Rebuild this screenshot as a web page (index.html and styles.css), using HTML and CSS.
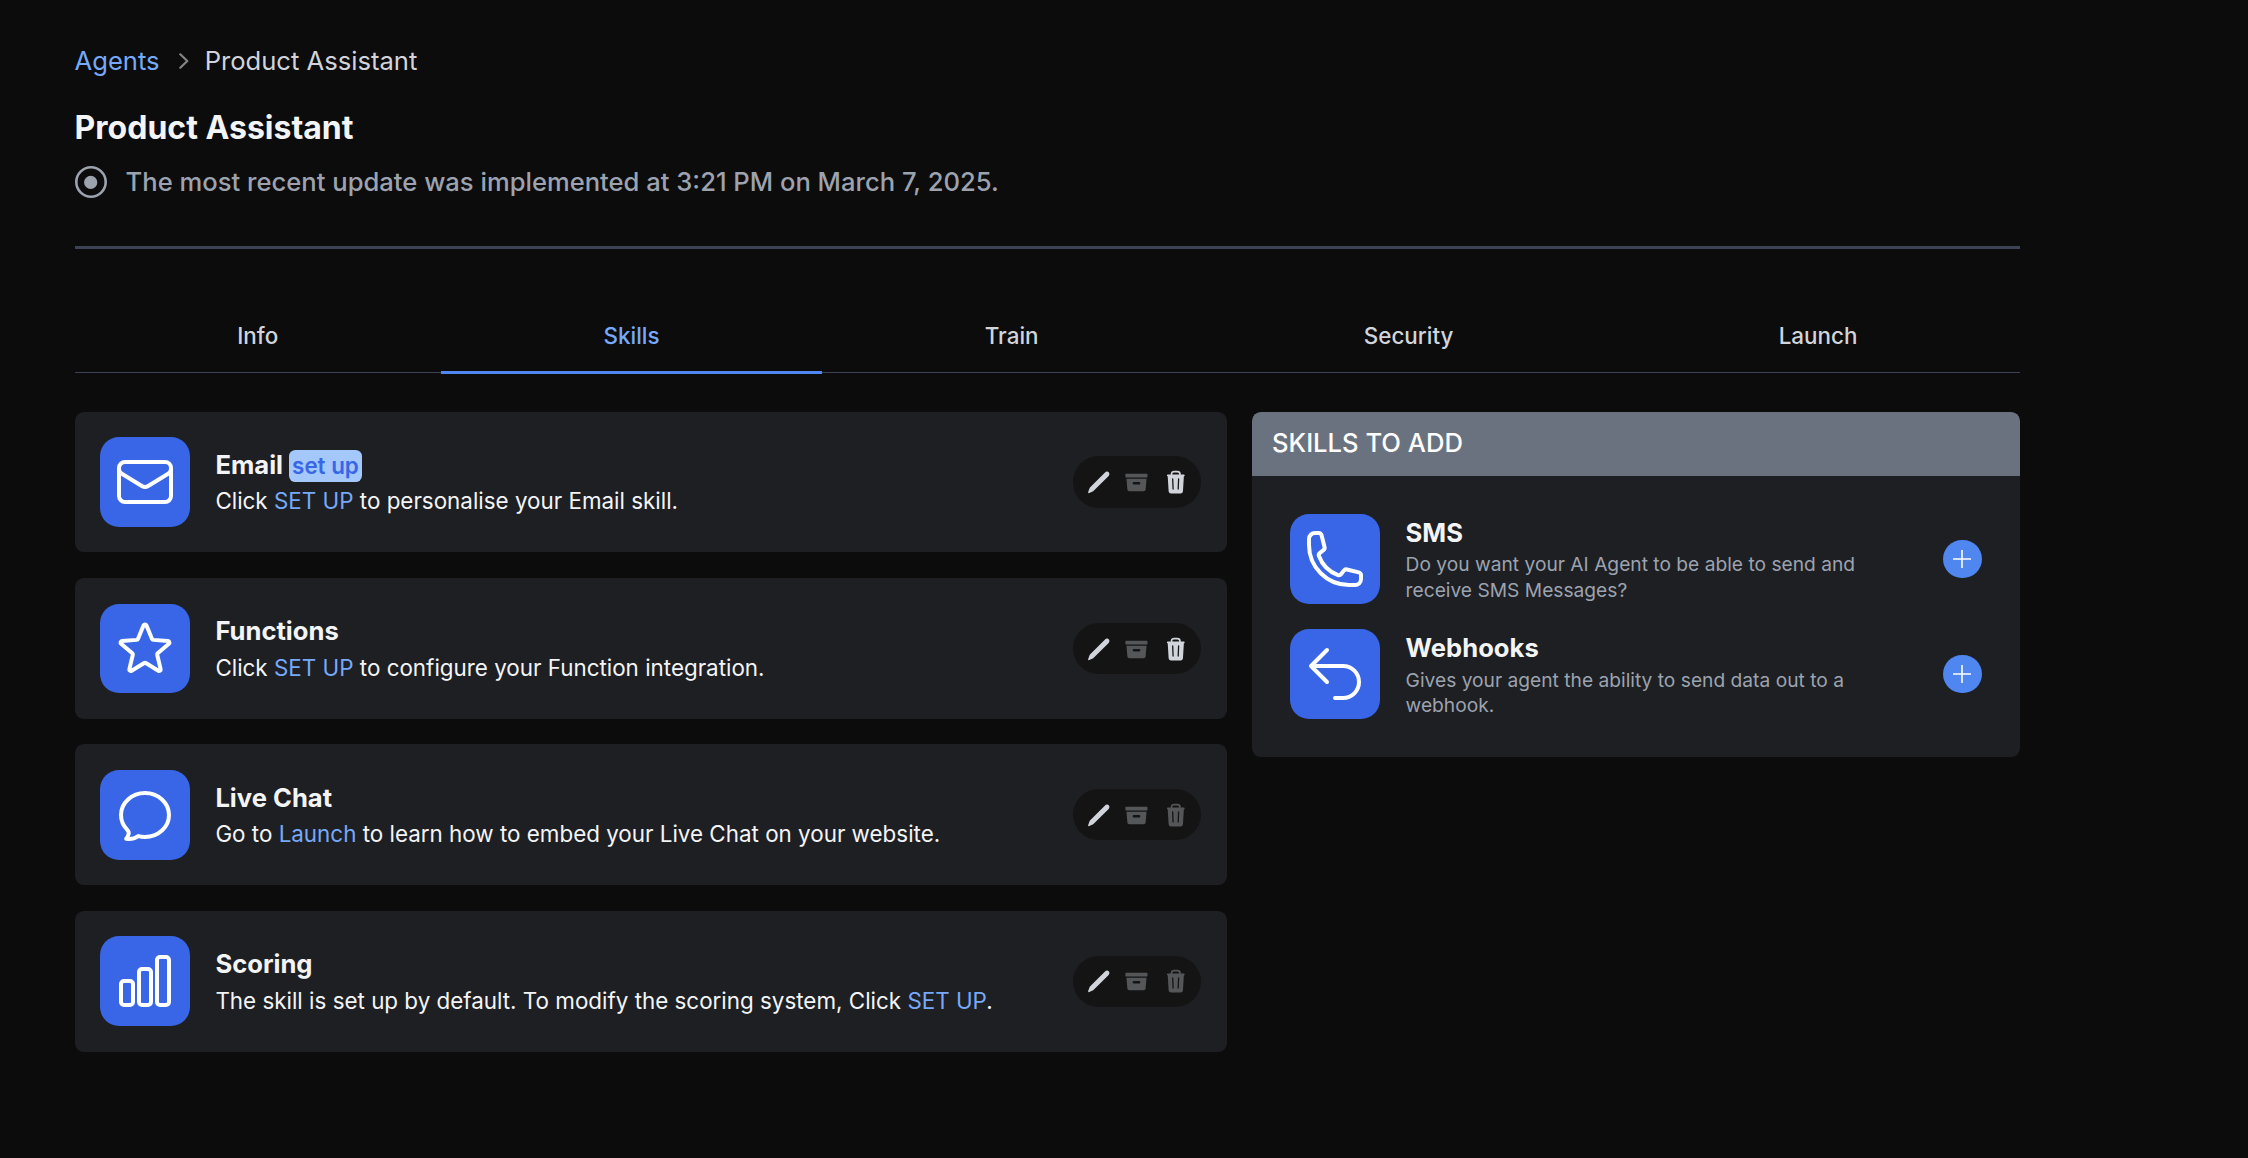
FILE: index.html
```html
<!DOCTYPE html>
<html lang="en">
<head>
<meta charset="utf-8">
<title>Product Assistant</title>
<link rel="stylesheet" href="styles.css">
</head>
<body>
<svg class="sprite" aria-hidden="true">
  <symbol id="pencil" viewBox="0 0 26 26"><path d="M2.400 24.300c-.4-.4-.3-.9 0-1.500l1.400-3.700L18.800 4c1.500-1.500 3.200-1.800 4.300-.7s.9 2.900-.6 4.300L7.300 22.700l-3.400 1.500c-.6.300-1.100.500-1.500.100z"/></symbol>
  <symbol id="archive" viewBox="0 0 26 26"><path d="M2.500 4.700h20.300c.7 0 1.100.4 1.100 1.100v1.700c0 .7-.4 1.100-1.100 1.100H2.500c-.7 0-1.100-.4-1.100-1.100V5.800c0-.7.400-1.100 1.100-1.100z"/><path fill-rule="evenodd" d="M2.500 10h20.400l-.9 10.300c-.1 1.500-.8 2.300-2.200 2.300H5.700c-1.500 0-2.200-.8-2.300-2.300zM10 13.300a1.200 1.200 0 0 0 0 2.400h5.400a1.200 1.200 0 0 0 0-2.400z"/></symbol>
  <symbol id="trash" viewBox="0 0 26 26"><path d="M8.700 6V5.100c0-1.700 1.100-2.500 2.600-2.500h3.300c1.500 0 2.600.8 2.600 2.500V6" fill="none" stroke="currentColor" stroke-width="1.700"/><path fill-rule="evenodd" d="M4.800 5.700h16.400c.5 0 .8.300.8.800s-.3.900-.8.900l-.9 15c-.1 1.700-1 2.500-2.500 2.500H8.200c-1.500 0-2.400-.8-2.500-2.500l-.9-15c-.5 0-.8-.4-.8-.9s.3-.8.800-.8zM9.800 9.400c-.4 0-.6.300-.6.700l.4 10.300c0 .4.300.7.700.7s.6-.3.600-.7l-.4-10.300c0-.4-.3-.7-.7-.7zM15.900 9.400c-.4 0-.7.300-.7.700l-.4 10.300c0 .4.200.7.600.7s.7-.3.700-.7l.4-10.300c0-.4-.2-.7-.6-.7z"/></symbol>
</svg>
<main class="page">
  <nav class="breadcrumb">
    <a class="link" href="#">Agents</a>
    <svg class="chevron" viewBox="0 0 10 16"><path d="M1.300 1.300 8.300 8l-7 6.700"/></svg>
    <span>Product Assistant</span>
  </nav>
  <header class="intro">
    <h1 class="heading">Product Assistant</h1>
    <p class="status">
      <svg class="status-icon" viewBox="0 0 32 32"><circle cx="16" cy="16" r="14.700" fill="none" stroke="currentColor" stroke-width="2.600"/><circle cx="15.700" cy="16.400" r="6.600" fill="currentColor"/></svg>
      The most recent update was implemented at 3:21 PM on March 7, 2025.
    </p>
  </header>
  <nav class="tabs">
    <a class="tab" href="#">Info</a>
    <a class="tab tab-active" href="#">Skills</a>
    <a class="tab" href="#">Train</a>
    <a class="tab" href="#">Security</a>
    <a class="tab" href="#">Launch</a>
  </nav>
  <div class="columns">
    <section class="skills">
      <article class="card">
        <div class="tile"><svg viewBox="0 0 24 24"><path d="M21.750 6.750v10.500a2.250 2.250 0 0 1-2.250 2.250h-15a2.250 2.250 0 0 1-2.250-2.250V6.750m19.500 0A2.250 2.250 0 0 0 19.500 4.500h-15a2.250 2.250 0 0 0-2.250 2.250m19.500 0v.243a2.250 2.250 0 0 1-1.070 1.916l-7.500 4.615a2.250 2.250 0 0 1-2.360 0L3.320 8.910a2.250 2.250 0 0 1-1.070-1.916V6.750"/></svg></div>
        <div class="info">
          <h2 class="name">Email <span class="badge">set up</span></h2>
          <p class="text">Click <a class="link" href="#">SET UP</a> to personalise your Email skill.</p>
        </div>
        <div class="actions">
          <svg><use href="#pencil"/></svg><svg class="off"><use href="#archive"/></svg><svg><use href="#trash"/></svg>
        </div>
      </article>
      <article class="card">
        <div class="tile"><svg viewBox="0 0 24 24"><path d="M11.480 3.499a.562.562 0 0 1 1.040 0l2.125 5.111a.563.563 0 0 0 .475.345l5.518.442c.499.040.701.663.321.988l-4.204 3.602a.563.563 0 0 0-.182.557l1.285 5.385a.562.562 0 0 1-.840.610l-4.725-2.885a.562.562 0 0 0-.586 0L6.982 20.540a.562.562 0 0 1-.840-.610l1.285-5.386a.562.562 0 0 0-.182-.557l-4.204-3.602a.562.562 0 0 1 .321-.988l5.518-.442a.563.563 0 0 0 .475-.345L11.480 3.500Z"/></svg></div>
        <div class="info">
          <h2 class="name">Functions</h2>
          <p class="text">Click <a class="link" href="#">SET UP</a> to configure your Function integration.</p>
        </div>
        <div class="actions">
          <svg><use href="#pencil"/></svg><svg class="off"><use href="#archive"/></svg><svg><use href="#trash"/></svg>
        </div>
      </article>
      <article class="card">
        <div class="tile"><svg viewBox="0 0 24 24"><path d="M12 20.250c4.970 0 9-3.694 9-8.250s-4.030-8.250-9-8.250S3 7.444 3 12c0 2.104.859 4.023 2.273 5.480.432.447.740 1.040.586 1.641a4.483 4.483 0 0 1-.923 1.785A5.969 5.969 0 0 0 6 21c1.282 0 2.470-.402 3.445-1.087.810.220 1.668.337 2.555.337Z"/></svg></div>
        <div class="info">
          <h2 class="name">Live Chat</h2>
          <p class="text">Go to <a class="link" href="#">Launch</a> to learn how to embed your Live Chat on your website.</p>
        </div>
        <div class="actions">
          <svg><use href="#pencil"/></svg><svg class="off"><use href="#archive"/></svg><svg class="off"><use href="#trash"/></svg>
        </div>
      </article>
      <article class="card">
        <div class="tile"><svg viewBox="0 0 24 24"><path d="M3 13.125C3 12.504 3.504 12 4.125 12h2.250c.621 0 1.125.504 1.125 1.125v6.750C7.500 20.496 6.996 21 6.375 21h-2.250A1.125 1.125 0 0 1 3 19.875v-6.750ZM9.750 8.625c0-.621.504-1.125 1.125-1.125h2.250c.621 0 1.125.504 1.125 1.125v11.250c0 .621-.504 1.125-1.125 1.125h-2.250a1.125 1.125 0 0 1-1.125-1.125V8.625ZM16.500 4.125c0-.621.504-1.125 1.125-1.125h2.250C20.496 3 21 3.504 21 4.125v15.750c0 .621-.504 1.125-1.125 1.125h-2.250a1.125 1.125 0 0 1-1.125-1.125V4.125Z"/></svg></div>
        <div class="info">
          <h2 class="name">Scoring</h2>
          <p class="text">The skill is set up by default. To modify the scoring system, Click <a class="link" href="#">SET UP</a>.</p>
        </div>
        <div class="actions">
          <svg><use href="#pencil"/></svg><svg class="off"><use href="#archive"/></svg><svg class="off"><use href="#trash"/></svg>
        </div>
      </article>
    </section>
    <aside class="panel">
      <h2 class="panel-title">SKILLS TO ADD</h2>
      <ul class="panel-list">
        <li class="option">
          <div class="tile"><svg viewBox="0 0 24 24"><path d="M2.250 6.750c0 8.284 6.716 15 15 15h2.250a2.250 2.250 0 0 0 2.250-2.250v-1.372c0-.516-.351-.966-.852-1.091l-4.423-1.106c-.440-.110-.902.055-1.173.417l-.970 1.293c-.282.376-.769.542-1.210.380a12.035 12.035 0 0 1-7.143-7.143c-.162-.441.004-.928.380-1.210l1.293-.970c.363-.271.527-.734.417-1.173L6.963 3.102a1.125 1.125 0 0 0-1.091-.852H4.500A2.250 2.250 0 0 0 2.250 4.500v2.250Z"/></svg></div>
          <div class="info">
            <h3 class="name">SMS</h3>
            <p class="hint">Do you want your AI Agent to be able to send and receive SMS Messages?</p>
          </div>
          <button class="add" aria-label="Add SMS"><svg viewBox="0 0 18 18"><path d="M9 0v18M0 9h18"/></svg></button>
        </li>
        <li class="option">
          <div class="tile"><svg viewBox="0 0 24 24"><path d="M9 15 3 9m0 0 6-6M3 9h12a6 6 0 0 1 0 12h-3"/></svg></div>
          <div class="info">
            <h3 class="name">Webhooks</h3>
            <p class="hint">Gives your agent the ability to send data out to a webhook.</p>
          </div>
          <button class="add" aria-label="Add Webhooks"><svg viewBox="0 0 18 18"><path d="M9 0v18M0 9h18"/></svg></button>
        </li>
      </ul>
    </aside>
  </div>
</main>
</body>
</html>
```
FILE: styles.css
```css
html {
  font-size: 25.6px;
}

* {
  box-sizing: border-box;
}

body {
  margin: 0;
  min-height: 100vh;
  background: #0c0c0c;
  color: #f3f4f6;
  font-family: Inter, "Liberation Sans", sans-serif;
  line-height: 1.5;
}

h1, h2, h3, p, ul {
  margin: 0;
  padding: 0;
}

a {
  color: inherit;
  text-decoration: none;
}

.sprite {
  display: none;
}

.link {
  color: #76a9fa;
}

.page {
  width: 2020px;
  padding: 42px 0 0 74.600px;
}

.breadcrumb {
  display: flex;
  align-items: center;
  color: #d1d5db;
}

.chevron {
  width: 10px;
  height: 16px;
  margin: 0 16px 0 19px;
  fill: none;
  stroke: #858585;
  stroke-width: 2.2;
  stroke-linecap: round;
  stroke-linejoin: round;
}

.intro {
  height: 168.600px;
  padding-top: 26px;
  border-bottom: 3px solid #3b4354;
}

.heading {
  font-size: 1.25rem;
  font-weight: 700;
  line-height: 1.75rem;
}

.status {
  display: flex;
  align-items: center;
  gap: 19px;
  margin-top: 12px;
  color: #9ca3af;
  font-weight: 500;
}

.status-icon {
  width: 32px;
  height: 32px;
}

.tabs {
  display: flex;
  height: 54px;
  margin-top: 70px;
  border-bottom: 1px solid #3b4354;
  color: #d1d5db;
  font-size: 0.875rem;
  font-weight: 500;
}

.tab {
  flex: 1 1 auto;
  height: 55px;
  text-align: center;
}

.tab-active {
  color: #76a9fa;
  border-bottom: 3px solid #4f86f0;
}

.columns {
  display: grid;
  grid-template-columns: 1152px 768px;
  justify-content: space-between;
  align-items: start;
  margin-top: 38.600px;
}

.skills {
  display: grid;
  gap: 1rem;
}

.card {
  display: flex;
  align-items: center;
  gap: 1rem;
  height: 5.500rem;
  padding: 0 1rem;
  border-radius: 0.350rem;
  background: #1e1f23;
}

.tile {
  display: grid;
  flex: none;
  place-items: center;
  width: 3.500rem;
  height: 3.500rem;
  border-radius: 0.750rem;
  background: #3866e6;
}

.tile svg {
  width: 2.500rem;
  height: 2.500rem;
  fill: none;
  stroke: #fff;
  stroke-width: 1.500;
  stroke-linecap: round;
  stroke-linejoin: round;
}

.info {
  flex: 1;
}

.name {
  font-size: 1rem;
  font-weight: 700;
  line-height: 1.500rem;
}

.badge {
  display: inline-block;
  padding: 0 3px;
  border-radius: 0.250rem;
  background: #a4c8fb;
  color: #3866e6;
  font-size: 0.875rem;
  font-weight: 600;
  line-height: 1.250rem;
}

.text {
  font-size: 0.875rem;
  line-height: 1.500;
}

.actions {
  display: flex;
  align-items: center;
  gap: 0.500rem;
  height: 2rem;
  padding: 0 0.500rem;
  border-radius: 1rem;
  background: #141414;
  color: #d1d5db;
}

.actions svg {
  width: 1rem;
  height: 1rem;
  fill: currentColor;
}

.actions .off {
  color: #555658;
}

.panel {
  overflow: hidden;
  border-radius: 0.350rem;
  background: #1e1f23;
}

.panel-title {
  height: 2.500rem;
  padding: 12px 20px;
  background: #6b727f;
  color: #fff;
  font-size: 1rem;
  font-weight: 500;
}

.panel-list {
  display: grid;
  gap: 1rem;
  padding: 1.500rem;
  list-style: none;
}

.option {
  display: flex;
  align-items: center;
  gap: 1rem;
}

.hint {
  color: #9ca3af;
  font-size: 0.750rem;
  line-height: 1rem;
}

.add {
  display: grid;
  place-items: center;
  width: 1.500rem;
  height: 1.500rem;
  padding: 0;
  border: 0;
  border-radius: 50%;
  background: #4f86f0;
}

.add svg {
  width: 18px;
  height: 18px;
  stroke: #fff;
  stroke-width: 1.600;
}
```
